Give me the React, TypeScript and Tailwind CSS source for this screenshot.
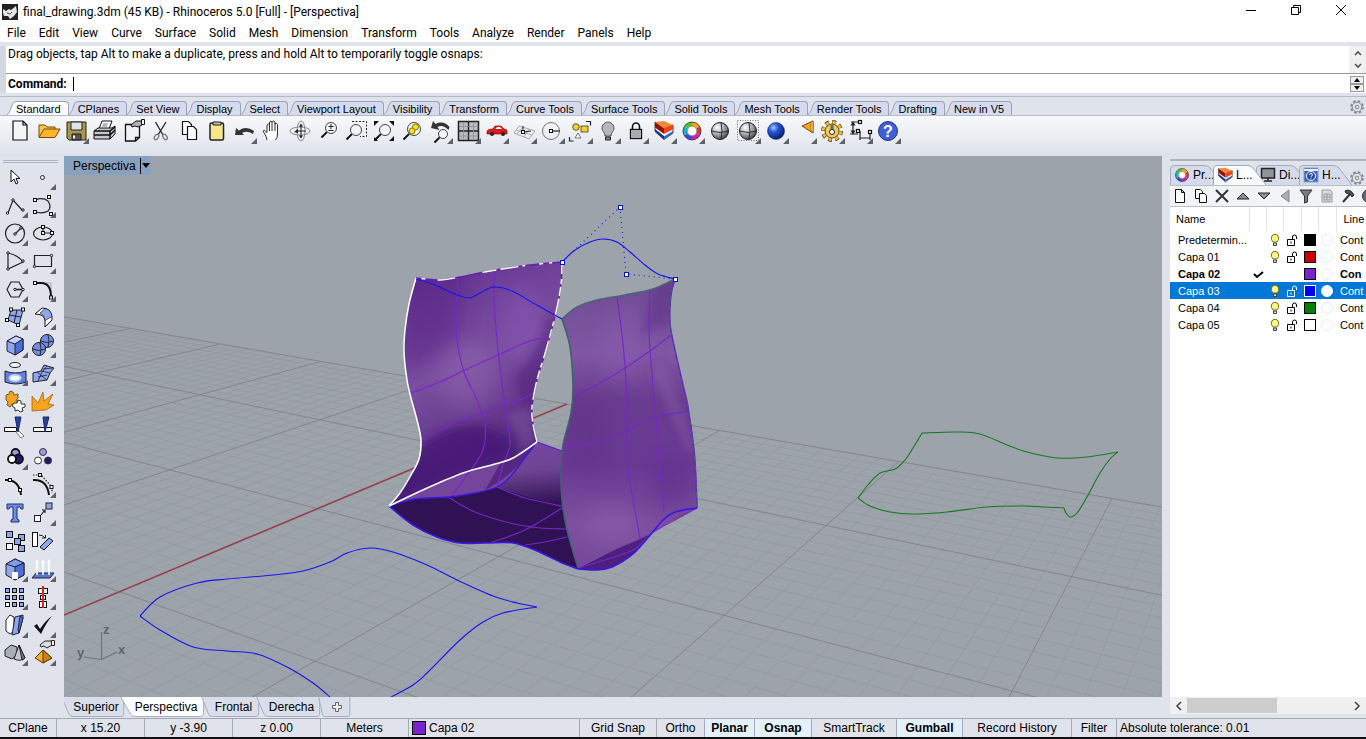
import React from "react";

type Pt = [number, number];

// Catmull-Rom spline through the points
const smooth = (pts: Pt[], move = true) => {
  let d = move ? `M${pts[0][0]} ${pts[0][1]}` : "";
  for (let i = 0; i < pts.length - 1; i++) {
    const p0 = pts[i - 1] || pts[i];
    const p1 = pts[i];
    const p2 = pts[i + 1];
    const p3 = pts[i + 2] || p2;
    d += `C${p1[0] + (p2[0] - p0[0]) / 6} ${p1[1] + (p2[1] - p0[1]) / 6} ${p2[0] - (p3[0] - p1[0]) / 6} ${p2[1] - (p3[1] - p1[1]) / 6} ${p2[0]} ${p2[1]}`;
  }
  return d;
};

// Construction plane -> screen
const project = (u: number, v: number): Pt => {
  const w = 1 - 0.05714 * u - 0.0952 * v;
  return [(131 + 76.6 * u - 126.3 * v) / w, (328.5 - 4.2 * u - 8.03 * v) / w];
};

const gridLine = (a: Pt, b: Pt) => {
  const p = project(...a);
  const q = project(...b);
  return `M${p[0].toFixed(1)} ${p[1].toFixed(1)}L${q[0].toFixed(1)} ${q[1].toFixed(1)}`;
};

const STEPS = 10;
let minorPath = "";
let majorPath = "";
for (let i = -1 * STEPS; i <= 8 * STEPS; i++) {
  if (i === 4 * STEPS) continue;
  const line = gridLine([i / STEPS, 0], [i / STEPS, 4.5]);
  if (i % STEPS === 0) majorPath += line;
  else minorPath += line;
}
for (let j = 0; j <= 4 * STEPS; j++) {
  const line = gridLine([-1, j / STEPS], [8, j / STEPS]);
  if (j % STEPS === 0) majorPath += line;
  else minorPath += line;
}

const leftEdge: Pt[] = [[416, 278], [409, 304], [405, 330], [404, 352], [407, 380], [411, 398], [417, 420], [421, 440], [419, 459], [411, 475], [400, 493], [389, 506]];
const whiteBase: Pt[] = [[389, 506], [425, 489], [463, 473], [495, 464], [513, 458], [537, 442]];
const leftRight: Pt[] = [[537, 442], [533, 424], [532, 407], [537, 380], [546, 350], [556, 312], [561, 284], [562, 262]];
const leftTop: Pt[] = [[562, 262], [530, 265], [490, 271], [460, 277], [440, 280], [416, 278]];
const leftSheet = smooth(leftEdge) + smooth(whiteBase, false) + smooth(leftRight, false) + smooth(leftTop, false) + "Z";

const stripEdge: Pt[] = [[389, 506], [415, 499], [448, 497], [475, 493], [497, 487], [510, 477], [523, 460], [537, 442]];
const strip = smooth(stripEdge) + smooth([...whiteBase].reverse(), false) + "Z";

const baseFront: Pt[] = [[389, 506], [413, 525], [437, 537], [460, 543], [485, 543], [513, 543], [537, 551], [560, 562], [578, 569]];
const baseLip: Pt[] = [[578, 569], [595, 570], [612, 567], [633, 554], [652, 533], [662, 521], [675, 512], [697, 508]];
const base = smooth(baseFront) + "L570 505L562 451L537 442" + smooth([...stripEdge].reverse(), false) + "Z";

const rightTop: Pt[] = [[562, 319], [577, 307], [597, 300], [625, 295], [653, 289], [675, 279]];
const rightRight: Pt[] = [[675, 279], [671, 295], [670, 323], [675, 350], [683, 385], [688, 407], [694, 450], [696, 480], [697, 508]];
const rightBottom: Pt[] = [[697, 508], [675, 519], [652, 533], [640, 539], [610, 552], [578, 568]];
const rightLeft: Pt[] = [[578, 568], [567, 530], [562, 500], [561, 470], [563, 445], [571, 413], [573, 387], [570, 347], [562, 319]];
const rightSheet = smooth(rightTop) + smooth(rightRight, false) + smooth(rightBottom, false) + smooth(rightLeft, false) + "Z";

const blueCurve = smooth([[330, 697], [313, 683], [287, 667], [257, 654], [227, 651], [193, 647], [160, 630], [140, 616]]) +
  smooth([[140, 616], [160, 597], [197, 583], [227, 579], [273, 575], [303, 571], [330, 562], [347, 553], [370, 548], [393, 552], [427, 565], [457, 580], [493, 596], [517, 603], [537, 607]]) +
  smooth([[537, 607], [503, 613], [483, 622], [460, 640], [427, 673], [413, 685], [391, 697]]);

const greenCurve = smooth([[922, 433], [957, 432], [980, 434], [1007, 445], [1027, 452], [1057, 458], [1087, 457], [1118, 452]]) +
  smooth([[1118, 452], [1110, 459], [1100, 473], [1087, 497], [1077, 513], [1070, 517], [1066, 513], [1064, 508]]) +
  smooth([[1064, 508], [1047, 507], [1023, 506], [987, 507], [947, 512], [913, 514], [890, 512], [870, 506], [858, 498]]) +
  smooth([[858, 498], [868, 485], [880, 473], [895, 469], [905, 460], [913, 448], [922, 433]]);

const handles: Pt[] = [[562, 262], [620, 207], [626, 274], [675, 279]];

function Scene() {
  return (
    <svg viewBox="64 156 1098 541" preserveAspectRatio="xMinYMin slice" className="absolute inset-0 h-full w-full">
      <defs>
        <linearGradient id="leftFill" x1="0" y1="0" x2="0.3" y2="1">
          <stop offset="0" stopColor="#5d2a87" />
          <stop offset="0.22" stopColor="#6d3d98" />
          <stop offset="0.5" stopColor="#7b50a0" />
          <stop offset="0.7" stopColor="#6a3e90" />
          <stop offset="1" stopColor="#451a72" />
        </linearGradient>
        <linearGradient id="rightFill" x1="0" y1="0" x2="0" y2="1">
          <stop offset="0" stopColor="#6f4b92" />
          <stop offset="0.26" stopColor="#7f57a2" />
          <stop offset="0.42" stopColor="#693c8f" />
          <stop offset="0.65" stopColor="#693a94" />
          <stop offset="0.85" stopColor="#7d519f" />
          <stop offset="1" stopColor="#75489b" />
        </linearGradient>
        <linearGradient id="innerFill" x1="0.4" y1="0" x2="0.5" y2="1">
          <stop offset="0" stopColor="#7546a0" />
          <stop offset="0.45" stopColor="#6e4393" />
          <stop offset="1" stopColor="#2d1050" />
        </linearGradient>
        <filter id="soft" x="-50%" y="-50%" width="200%" height="200%">
          <feGaussianBlur stdDeviation="10" />
        </filter>
        <filter id="soft2" x="-50%" y="-50%" width="200%" height="200%">
          <feGaussianBlur stdDeviation="4" />
        </filter>
        <clipPath id="leftClip"><path d={leftSheet} /></clipPath>
        <clipPath id="rightClip"><path d={rightSheet} /></clipPath>
      </defs>

      <path d={minorPath} stroke="#90969d" strokeWidth="1" fill="none" opacity="0.5" />
      <path d={majorPath} stroke="#81868d" strokeWidth="1" fill="none" />
      <path d="M64 615L567 404" stroke="#963f49" strokeWidth="1.6" />

      <path d={base} fill="#2f1154" />
      <path d="M537 442L563 451L563 507Q525 497 497 487Q515 475 523 460Z" fill="url(#innerFill)" />
      <path d={smooth(baseLip) + "L578 568Z"} fill="#4d2080" />
      <g fill="none" stroke="#7428c4" strokeWidth="1.2">
        <path d={smooth([[448, 497], [475, 512], [510, 523], [540, 528], [566, 529]])} />
        <path d={smooth([[497, 487], [525, 498], [562, 506]])} />
        <path d={smooth([[492, 542], [525, 530], [562, 508]])} />
        <path d={smooth([[525, 545], [545, 542], [567, 537]])} />
      </g>

      <path d={leftSheet} fill="url(#leftFill)" />
      <g clipPath="url(#leftClip)">
        <path d="M395 260L470 265Q460 330 455 345L400 375Z" fill="#511e7e" opacity="0.4" filter="url(#soft)" />
        <ellipse cx="522" cy="325" rx="18" ry="40" fill="#8654b4" opacity="0.6" filter="url(#soft)" />
        <ellipse cx="468" cy="375" rx="30" ry="34" fill="#8c64aa" opacity="0.55" filter="url(#soft)" />
        <path d="M563 310L545 320Q545 345 515 375Q520 410 532 425Z" fill="#4d1b79" opacity="0.5" filter="url(#soft2)" />
        <path d="M421 445Q460 415 495 430Q515 440 510 455Q450 475 390 505L380 480Z" fill="#451974" opacity="0.75" filter="url(#soft2)" />
        <path d="M507 415L520 440L518 455L536 442L532 405Z" fill="#8560a4" opacity="0.45" filter="url(#soft2)" />
      </g>
      <path d={strip} fill="#74459a" />
      <path d="M485 490Q515 475 536 443Q520 458 500 464Z" fill="#4a1d78" opacity="0.7" />
      <g fill="none" stroke="#7528c6" strokeWidth="1.2">
        <path d={smooth([[458, 279], [456, 310], [457, 340], [464, 372], [477, 400], [485, 425], [483, 450], [470, 471], [452, 495]])} />
        <path d={smooth([[495, 271], [494, 300], [498, 350], [503, 390], [508, 425], [510, 445], [503, 465], [497, 486]])} />
        <path d={smooth([[411, 393], [440, 382], [465, 370], [500, 354], [530, 341], [549, 337]])} />
        <path d={smooth([[421, 440], [450, 425], [480, 414], [510, 404], [534, 393]])} />
      </g>

      <path d={rightSheet} fill="url(#rightFill)" />
      <g clipPath="url(#rightClip)">
        <ellipse cx="622" cy="345" rx="24" ry="34" fill="#8a5cb0" opacity="0.5" filter="url(#soft)" />
        <path d="M655 285L678 278L668 330Q655 320 640 340Z" fill="#5a2a85" opacity="0.45" filter="url(#soft2)" />
        <path d="M650 370L665 365L696 450L690 455Z" fill="#8d66ac" opacity="0.4" filter="url(#soft2)" />
        <ellipse cx="612" cy="525" rx="26" ry="20" fill="#8c5eae" opacity="0.5" filter="url(#soft)" />
        <ellipse cx="670" cy="485" rx="20" ry="26" fill="#592b87" opacity="0.4" filter="url(#soft)" />
        <ellipse cx="585" cy="435" rx="22" ry="40" fill="#5b2d82" opacity="0.35" filter="url(#soft)" />
      </g>
      <g fill="none" stroke="#7528c6" strokeWidth="1.2">
        <path d={smooth([[617, 297], [622, 335], [626, 380], [627, 430], [628, 470], [634, 505], [640, 538]])} />
        <path d={smooth([[650, 290], [649, 330], [652, 375], [656, 420], [660, 470], [664, 512]])} />
        <path d={smooth([[573, 396], [595, 386], [625, 368], [650, 351], [671, 335]])} />
        <path d={smooth([[563, 447], [590, 444], [620, 434], [650, 419], [688, 411]])} />
        <path d={smooth([[578, 568], [605, 560], [635, 549], [652, 533], [675, 520], [697, 508]])} />
      </g>

      <path d={smooth(rightTop)} fill="none" stroke="#4c6378" strokeWidth="1.6" />
      <path d={smooth(rightLeft)} fill="none" stroke="#40606f" strokeWidth="1.6" />
      <path d={smooth(rightRight)} fill="none" stroke="#6422c8" strokeWidth="1.5" />
      <path d={smooth(rightRight)} fill="none" stroke="#3e6a60" strokeWidth="1" strokeDasharray="5 4" />
      <path d={smooth(baseFront)} fill="none" stroke="#3c16e6" strokeWidth="1.6" />
      <path d={smooth(baseLip)} fill="none" stroke="#3c16e6" strokeWidth="1.6" />
      <path d={smooth(stripEdge)} fill="none" stroke="#3c16e6" strokeWidth="1.3" />
      <path d="M537 442L562 451" stroke="#5a20c8" strokeWidth="1.3" />
      <path d={smooth(leftTop)} fill="none" stroke="#6420a8" strokeWidth="1.4" />
      <path d={smooth(leftTop)} fill="none" stroke="#fff" strokeWidth="1.4" strokeDasharray="2 8 3 6 4 14 3 4 18 4 14 28 18 12 4 40" />
      <path d={smooth(leftRight)} fill="none" stroke="#6420a8" strokeWidth="1.4" />
      <path d={smooth(leftRight)} fill="none" stroke="#fff" strokeWidth="1.4" strokeDasharray="18 3 9 3 5 5" />
      <path d={smooth(leftEdge)} fill="none" stroke="#fff" strokeWidth="1.5" />
      <path d={smooth(whiteBase)} fill="none" stroke="#fff" strokeWidth="1.6" />

      <g fill="none" stroke="#1515f0" strokeWidth="1.1">
        <path d={smooth([[416, 279], [435, 285], [455, 294], [469, 298], [480, 293], [494, 287], [512, 291], [535, 304], [562, 319]])} />
        <path d={smooth([[562, 262], [575, 250], [590, 242], [603, 239], [617, 242], [630, 252], [645, 265], [658, 274], [675, 279]])} />
        <path d={blueCurve} />
        <path d="M562 262L620 207L626 274L675 279" strokeDasharray="1 4" />
      </g>
      <path d={greenCurve} fill="none" stroke="#147a20" strokeWidth="1.1" />
      {handles.map(([x, y]) => (
        <rect key={`${x}-${y}`} x={x - 1.5} y={y - 1.5} width="4" height="4" fill="#fff" stroke="#0a14c8" />
      ))}

      <g fill="none" stroke="#6f757c" strokeWidth="1.2">
        <path d="M101.500 632V659.500M101 659.500L84 657M101 659.500L117 652" />
      </g>
      <g fill="#61676e" fontFamily="Liberation Sans, Arial, sans-serif" fontWeight="bold" fontSize="13">
        <text x="103" y="634">z</text>
        <text x="118" y="654">x</text>
        <text x="77" y="657">y</text>
      </g>
    </svg>
  );
}

const k = { fill: "none", stroke: "#222", strokeWidth: 1.2 };
const dot = (x: number, y: number) => <rect x={x - 1.5} y={y - 1.5} width="3" height="3" fill="#fff" stroke="#111" />;
const knot = (x: number, y: number) => <circle cx={x} cy={y} r="1.2" fill="#fff" stroke="#111" />;
const sphere = (fill: string, cx = 14, cy = 14, r = 8.5) => (
  <g>
    <circle cx={cx} cy={cy} r={r} fill={fill} stroke="#222" />
    <path d={`M${cx - r} ${cy}Q${cx} ${cy + 3} ${cx + r} ${cy}M${cx + 1} ${cy - r}Q${cx + 3} ${cy} ${cx + 1} ${cy + r}`} {...k} strokeWidth={0.9} />
  </g>
);
const lens = (cx = 17, cy = 11, r = 5.5) => (
  <g>
    <circle cx={cx} cy={cy} r={r} fill="#f2f4f7" stroke="#444" />
    <path d={`M${cx - r * 0.75} ${cy + r * 0.75}L${cx - r - 4} ${cy + r + 4}`} stroke="#111" strokeWidth="2" />
  </g>
);
const page = (x = 7, y = 4) => (
  <path d={`M${x} ${y}h10l4 4v15h-14zM${x + 10} ${y}v4h4`} fill="#f4f5f7" stroke="#111" strokeWidth="1.2" />
);
const layersArt = (
  <g>
    <path d="M5 5l9 6 9-3v8l-9 6.500-9-8z" fill="#fff" stroke="#222" strokeWidth="0.8" />
    <path d="M5 5l9 6v6l-9-6.500z" fill="#8e1408" />
    <path d="M5 5l9-1 9 4-9 3.500z" fill="#f08a3c" />
    <path d="M14 11l9-3v4.500l-9 4.500z" fill="#f2441c" />
    <path d="M5 12l9 7v3.500l-9-8z" fill="#17328c" />
    <path d="M14 19.500l9-5.500v2.500l-9 6z" fill="#2b62d8" />
  </g>
);
const wheelArt = (
  <g fill="none" strokeWidth="4">
    <path d="M14 7a7 7 0 0 1 6 3.500" stroke="#f3a21b" />
    <path d="M20 10.500a7 7 0 0 1 0 7" stroke="#e3342f" />
    <path d="M20 17.500a7 7 0 0 1-6 3.500" stroke="#d11fb4" />
    <path d="M14 21a7 7 0 0 1-6-3.500" stroke="#3b49df" />
    <path d="M8 17.500a7 7 0 0 1 0-7" stroke="#18b2c9" />
    <path d="M8 10.500a7 7 0 0 1 6-3.500" stroke="#4cc52f" />
    <circle cx="14" cy="14" r="9" stroke="#333" strokeWidth="0.8" />
    <circle cx="14" cy="14" r="4.800" fill="#fff" stroke="#555" strokeWidth="0.6" />
  </g>
);

type Tool = { name: string; art: React.ReactNode; more?: boolean };

const topTools: Tool[] = [
  { name: "New", art: page() },
  { name: "Open", art: <g stroke="#7a4a00"><path d="M5 20V8h6l2 2h8v4" fill="#f6c64c" /><path d="M5 20.500l5-8.500h16l-5 8.500z" fill="#fbb52c" /></g> },
  { name: "Save", more: true, art: <g stroke="#222"><path d="M5 5h19v18H7l-2-2z" fill="#a89a48" /><path d="M9 5h11v8H9z" fill="#dfe3ea" /><path d="M10 17h9v6h-9z" fill="#555" /><path d="M12 18.500v3" stroke="#fff" strokeWidth="2" /></g> },
  { name: "Print", art: <g stroke="#111"><path d="M9 12l3-8h10l-3 8z" fill="#fff" /><path d="M13 7h5M12 9h5" stroke="#777" /><path d="M4 14l4-3h14l3-2v8l-5 5H4z" fill="#c5c9cf" /><path d="M4 14h16l5-4M20 14v8M4 18h16l5-5" fill="none" strokeWidth="1.5" /></g> },
  { name: "Properties", art: <g><path d="M7.500 7.500h14v13l-4 3.500h-10zM17.500 24v-3.500h4" fill="#f0f1f4" stroke="#111" strokeWidth="1.3" /><path d="M13 8l5-4h6v4l-4 2-3-1-3 1z" fill="#aeb3ba" stroke="#111" /><path d="M23.500 2.500h3v5h-3z" fill="#fff" stroke="#111" /></g> },
  { name: "Cut", art: <g fill="none" stroke="#222" strokeWidth="1.3"><path d="M9.500 5l7.500 13M20 5l-8 13" /><ellipse cx="10.500" cy="20" rx="1.800" ry="3" transform="rotate(35 10.500 20)" stroke="#777" /><ellipse cx="19" cy="20" rx="1.800" ry="3" transform="rotate(-35 19 20)" stroke="#777" /></g> },
  { name: "Copy", art: <g fill="#fff" stroke="#111" strokeWidth="1.2"><path d="M8.500 4.500h6l3 3v10h-9z" /><path d="M13.500 9.500h6l3 3v10h-9z" /></g> },
  { name: "Paste", art: <g stroke="#222"><rect x="8" y="6" width="13.500" height="17" rx="1.500" fill="#f9e787" strokeWidth="1.5" /><path d="M11 7V5h8v3h-8z" fill="#b9bec7" /></g> },
  { name: "Undo", more: true, art: <path d="M5 18l1-7 3 2.500q7-5 15 .5l-1 3q-6-4-11-1l2 2z" fill="#333" /> },
  { name: "Pan", art: <path d="M9 23q0-3-4-9 1-2 4 1.500V8q1.500-2 2.500 0V5q1.500-2 2.500 0v0q1.500-2 3 0v2q2-1.500 2.500.5V17q0 4-2 6M11.500 8v6M14 5v9M17 6v8" fill="#fff" stroke="#333" /> },
  { name: "Rotate View", art: <g fill="none" stroke="#888"><ellipse cx="14" cy="14" rx="10" ry="4" /><ellipse cx="15" cy="14" rx="4" ry="10" /><path d="M15 8v12M10 14h10" stroke="#222" /><path d="M13 9.500l2-3 2 3zM13 18.500l2 3 2-3zM8 15l4-3v4z" fill="#222" stroke="none" /></g> },
  { name: "Zoom Dynamic", art: <g>{lens()}<path d="M14.500 9.500h5M17 7v5M14.500 13.500h5" {...k} strokeWidth={1} /></g> },
  { name: "Zoom Window", art: <g><path d="M10 4.500h14.500v15H18" {...k} strokeDasharray="2 1.500" strokeWidth={1} />{lens(14, 13)}</g> },
  { name: "Zoom Extents", art: <g>{lens(15, 13)}<path d="M4 4h5l-5 5zM24 4h-5l5 5zM4 24h4l-4-4zM24 24h-5l5-5z" fill="#111" /></g> },
  { name: "Zoom Selected", art: <g>{lens(16, 12, 6.5)}<circle cx="17.500" cy="10" r="3" fill="#f5e11c" stroke="#8a7a00" /><circle cx="14" cy="14" r="3" fill="#f5e11c" stroke="#8a7a00" /></g> },
  { name: "Undo View", more: true, art: <g>{lens(17, 17, 4.5)}<path d="M5 11l2-7 2.500 3q8-4 14 3l-1 3q-6-6-11-3l2 3z" fill="#333" /></g> },
  { name: "Four Viewports", more: true, art: <g><rect x="4.500" y="4.500" width="20" height="19" fill="#b9bcc2" stroke="#222" strokeWidth="1.5" /><path d="M14.500 4v20M4 14h21" {...k} strokeWidth={1.4} /><path d="M19.500 5v18M5 19h19M9.500 5v18M5 9.500h19" {...k} stroke="#8b8f96" strokeWidth={0.8} /></g> },
  { name: "Car", more: true, art: <g><path d="M5 15q0-3 6-3l2-3h6l3 3q3 0 3 2v3H5z" fill="#de1b1b" stroke="#8a0a0a" strokeWidth="0.7" /><path d="M13.500 12l1.500-2h3l2 2z" fill="#fff" /><circle cx="10" cy="17" r="2" fill="#222" /><circle cx="21" cy="17" r="2" fill="#222" /></g> },
  { name: "CPlane", more: true, art: <g fill="none" stroke="#aaa"><path d="M9 9l16 5-6 8-15-6zM6 13l16 5M13 10l-6 7M19 12l-5 8" /><path d="M13 15V9M14 15l7-1" stroke="#222" />{dot(13, 15)}</g> },
  { name: "Circle", more: true, art: <g><circle cx="13" cy="14" r="8.500" {...k} stroke="#777" strokeWidth={1} /><path d="M13 14h9" {...k} />{dot(13, 14)}</g> },
  { name: "Select", more: true, art: <g><circle cx="10" cy="10" r="3.300" fill="#f5d322" stroke="#222" strokeWidth="0.7" /><rect x="15" y="9" width="7" height="6" fill="#f5d322" stroke="#222" strokeWidth="0.7" /><path d="M12 16l3 5H9z" fill="#fff" stroke="#777" /><path d="M20 4.500h4.500v4M3.500 20v4h4" {...k} /></g> },
  { name: "Hide", more: true, art: <g stroke="#555"><path d="M11 19q0-3-2.500-5.500a6 6 0 1 1 11 0Q17 16 17 19z" fill="#b3b6bb" /><path d="M11.500 20h5v3h-5z" fill="#888" stroke="#222" /></g> },
  { name: "Lock", more: true, art: <g><path d="M10.500 13V9.500a3.500 3.500 0 0 1 7 0V13" fill="none" stroke="#111" strokeWidth="1.6" /><rect x="8.500" y="12.500" width="11" height="9" fill="#c9ccd1" stroke="#111" strokeWidth="1.3" /><path d="M10 15h8M10 17h8M10 19h8" stroke="#888" /></g> },
  { name: "Layers", more: true, art: layersArt },
  { name: "Properties Wheel", more: true, art: wheelArt },
  { name: "Shade", art: sphere("url(#greyBall)") },
  { name: "Shade Selected", more: true, art: <g><rect x="3.500" y="3.500" width="21" height="20" fill="none" stroke="#777" strokeDasharray="1 1.500" />{sphere("url(#greyBall)")}</g> },
  { name: "Render", more: true, art: <circle cx="14" cy="14" r="8.500" fill="url(#blueBall)" stroke="#0b1a66" strokeWidth="0.5" /> },
  { name: "Spotlight", more: true, art: <g stroke="#7a4a00"><path d="M12 9l11-5 0 12z" fill="#f7a61e" /><path d="M21 5l2-1v12l-2-3z" fill="#ffd98a" strokeWidth="0.6" /></g> },
  { name: "Options", more: true, art: <g><circle cx="14" cy="14" r="8.500" fill="none" stroke="#6b4a00" strokeWidth="5" strokeDasharray="3.600 3.070" /><circle cx="14" cy="14" r="8.300" fill="none" stroke="#ecc258" strokeWidth="3.6" strokeDasharray="2.600 3.920" strokeDashoffset="-0.5" /><circle cx="14" cy="14" r="7" fill="#efc85c" stroke="#6b4a00" /><path d="M14 8v7" stroke="#666" strokeWidth="3" /><circle cx="14" cy="15" r="2.500" fill="#fff" stroke="#222" /></g> },
  { name: "Dimension", more: true, art: <g {...k}><path d="M5 5h9M7 6v9M4 17h8M14 14v9M14 21h10M24 14v9M19 21h1" /><path d="M5.500 8L7 5.500 8.500 8zM5.500 14L7 16.500 8.500 14z" fill="#111" />{dot(14, 5)}{dot(12, 14)}{dot(24, 15)}</g> },
  { name: "Help", more: true, art: <g><circle cx="14" cy="14" r="9.500" fill="#3f5fd6" stroke="#1c2f8f" /><text x="14" y="20" textAnchor="middle" fontSize="16" fontWeight="bold" fontFamily="Liberation Sans, Arial, sans-serif" fill="#fff">?</text></g> },
];

const B = "#8ea6ee";
const sideTools: Tool[] = [
  { name: "Pointer", art: <path d="M10 7v12l3-3 2 5 2-1-2-4.500h4z" fill="#fff" stroke="#111" /> },
  { name: "Point", more: true, art: <circle cx="13.500" cy="14.500" r="2" fill="#fff" stroke="#222" /> },
  { name: "Polyline", more: true, art: <g><path d="M7 22l5-13 10 11" {...k} />{knot(6.5, 22)}{knot(12, 9)}{knot(22, 19)}</g> },
  { name: "Curve", more: true, art: <g><path d="M6 9q8-3 13 1 4 6 0 10-5 3-13 1" {...k} />{dot(6, 9)}{dot(20, 6)}{dot(6, 21)}{dot(22, 23)}</g> },
  { name: "Circle", more: true, art: <g><circle cx="14" cy="14.500" r="9.500" {...k} /><path d="M14 15l6-6" {...k} />{knot(14, 15)}{knot(20, 9)}</g> },
  { name: "Ellipse", more: true, art: <g><ellipse cx="14" cy="14.500" rx="9.500" ry="6.500" {...k} /><path d="M14 14V8M14 14h9" {...k} />{dot(14, 14)}{dot(14, 8)}{dot(23, 14)}</g> },
  { name: "Arc", more: true, art: <g><path d="M7 6v16l15-7Q17 8 7 6" {...k} />{knot(7, 6)}{knot(22, 14)}{knot(7, 22)}</g> },
  { name: "Rectangle", more: true, art: <g><path d="M5.500 8.500h17v11h-17z" {...k} />{knot(22.5, 8.5)}{knot(5.5, 19.5)}</g> },
  { name: "Polygon", more: true, art: <g><path d="M6 14.500l4-7.500h8l4 7.500-4 7.500h-8z" {...k} /><path d="M14 14.500h8" {...k} strokeWidth={1.6} />{knot(14, 14.5)}{knot(22, 14.5)}</g> },
  { name: "Fillet", more: true, art: <g><path d="M6 8h16v15" fill="none" stroke="#aaa" /><path d="M6 8h6q10 0 10 14" fill="none" stroke="#111" strokeWidth="2" />{dot(6, 8)}{dot(22, 22.5)}</g> },
  { name: "Surface", more: true, art: <g><path d="M10 7h12l-4 15-11-5z" fill={B} stroke="#223" /><path d="M8 12l12 2M16 7l-3 13" {...k} strokeWidth={1} />{dot(10, 6.5)}{dot(22, 6.5)}{dot(6, 17)}{dot(17, 22)}</g> },
  { name: "Sweep", more: true, art: <g stroke="#111"><path d="M6 11l7-6q9 0 10 9v3l-7 7v-7q-1-6-10-6z" fill="#fff" /><path d="M11 10l5-4.500q6 1 7 8l-7 4q-1-6-5-7.500z" fill={B} strokeWidth="0.6" /></g> },
  { name: "Box", more: true, art: <g stroke="#223"><path d="M6 10l9-5 7 3v11l-8 5-8-4z" fill={B} /><path d="M6 10l8 3 8-5-7-3z" fill="#c5d2fb" /><path d="M14 13v11l8-5V8z" fill="#4f6fd8" /></g> },
  { name: "Boolean", more: true, art: <g>{sphere("#6f8ce6", 18, 10, 6.5)}{sphere("#6f8ce6", 10, 18, 6.5)}</g> },
  { name: "Project", more: true, art: <g stroke="#223"><ellipse cx="14" cy="6" rx="5.500" ry="2.500" fill="#f6f7fb" /><path d="M4 12q10 4 21 0v11q-10 4-21 0z" fill="#5f82e4" /><ellipse cx="14" cy="19" rx="5.500" ry="3" fill="#fff" stroke="#c5d2fb" strokeWidth="2" /></g> },
  { name: "Mesh", more: true, art: <g stroke="#223"><path d="M4 14l8-2 3-6 10 3-4 5-3 7-14 2z" fill={B} /><path d="M12 12l9 2M9 18l9-2M18 7l-5 6-4 9M8 13l10 8M14 10l10-1" {...k} strokeWidth={0.8} /></g> },
  { name: "Join", art: <g stroke="#553" strokeWidth="0.9"><path d="M5 8l3-1 1-3 3 1 1 3 4-1v4l-2 2 2 3-2 2-4-1-2 3-3-2 1-3-2-2z" fill="#f7a21c" /><path d="M13 16l3 0 1-3 3 1 0 3 4 0 0 3-3 1 1 3-3 1-2-2-3 1 0-3-3-2z" fill="#fff" stroke="#222" /></g> },
  { name: "Explode", art: <path d="M3 24V9l6 7 5-11 1 9 9-7-5 10 6 1-8 5z" fill="#f8a31d" stroke="#a0560a" strokeWidth="0.7" /> },
  { name: "Trim", art: <g stroke="#111"><path d="M3.500 12.500h12v4h-12z" fill="#fff" /><path d="M17 15l6 6-3 2-5-6z" fill="#fff" stroke="#777" /><path d="M14 2h6l-3 15z" fill="#24439e" stroke="#18276b" /></g> },
  { name: "Split", art: <g stroke="#111"><path d="M4.500 12.500h18v4h-18z" fill="#fff" /><path d="M14 2h6l-4 15z" fill="#24439e" stroke="#18276b" /></g> },
  { name: "Group", more: true, art: <g stroke="#111" strokeWidth="1.8"><circle cx="14.500" cy="10" r="4" fill="#9f97e8" /><circle cx="17.500" cy="16" r="4.500" fill="#201a70" /><circle cx="11" cy="16" r="4" fill="#fff" /></g> },
  { name: "Ungroup", art: <g stroke="#333"><circle cx="14" cy="9" r="3.500" fill="#9f97e8" /><circle cx="9" cy="17.500" r="3.500" fill="#fff" /><circle cx="19" cy="17.500" r="3.500" fill="#201a70" /></g> },
  { name: "Edit Points", art: <g><path d="M4 9q14-1 16 15" fill="none" stroke="#111" strokeWidth="2" />{dot(9, 9)}{dot(19, 19)}</g> },
  { name: "Control Points", more: true, art: <g><path d="M4 9q14-1 16 15" fill="none" stroke="#111" strokeWidth="2" /><path d="M4 4h8l11 12v6" {...k} strokeDasharray="1.5 1.5" />{dot(11, 4)}{dot(22.5, 16)}</g> },
  { name: "Text", art: <path d="M6 5h16v5l-2 0-1-2h-3v12l2 1v2h-8v-2l2-1V8H9l-1 2H6z" fill="#6c8be6" stroke="#1c2f7c" /> },
  { name: "Move", more: true, art: <g stroke="#222"><rect x="17" y="4" width="6" height="6" fill={B} /><rect x="5.500" y="16.500" width="6" height="6" fill="#fff" /><path d="M12 16l4-5M13 11h3v3" {...k} /></g> },
  { name: "Array Copy", art: <g stroke="#111" fill={B}><rect x="5.500" y="4.500" width="6" height="6" /><rect x="17.500" y="7.500" width="6" height="6" /><rect x="13.500" y="11.500" width="6" height="6" /><rect x="5.500" y="16.500" width="6" height="6" fill="#fff" /><rect x="17.500" y="18.500" width="6" height="6" /></g> },
  { name: "Orient", art: <g stroke="#111"><rect x="3.500" y="5.500" width="5" height="14" fill="#fff" /><path d="M11 20l9-9 4 3-9 9z" fill={B} /><path d="M10 8q4 0 6 3M13 11h3.500V8" {...k} strokeWidth={1} /></g> },
  { name: "Solid Edit", more: true, art: <g stroke="#223"><path d="M5 9l9-5 9 4v12l-9 5-9-5z" fill={B} /><path d="M5 9l9 3 9-4-9-4z" fill="#7f9cec" /><path d="M14 12v13l9-5V8z" fill="#4f6fd8" /><path d="M11 17h6v7h-6z" fill="#fff" stroke="none" /></g> },
  { name: "Extrude", more: true, art: <g><path d="M7 18h18l-4 5H3z" fill="#5577e0" stroke="#223" /><path d="M8 20V7M14 20V7M20 20V7" stroke="#fff" strokeWidth="1.6" /><path d="M6 8l2-4 2 4zM12 8l2-4 2 4zM18 8l2-4 2 4z" fill="#fff" /></g> },
  { name: "Array", more: true, art: <g stroke="#111">{[5, 12, 19].map((x) => [6, 13, 20].map((y) => <rect key={`${x}-${y}`} x={x - 0.5} y={y - 0.5} width="4" height="4" fill={y === 20 && x === 5 ? "#fff" : B} />))}</g> },
  { name: "Align", more: true, art: <g stroke="#111" fill="#fff"><rect x="9.500" y="5.500" width="9" height="5" /><rect x="11.500" y="12.500" width="5" height="4" /><rect x="10.500" y="18.500" width="7" height="6" /><path d="M14 3v22" stroke="#dd2222" strokeWidth="2" /></g> },
  { name: "Deform", more: true, art: <g stroke="#223"><path d="M5 9l4-5 4 2v14l-4 3-4-3z" fill="#fff" /><path d="M14 6l8-2v3l-4 15-7 2z" fill={B} /><path d="M19 5l3 2-4 15-1-3z" fill="#4f6fd8" /></g> },
  { name: "Check", more: true, art: <path d="M5 15l3-2 3 5q5-8 12-13-6 7-11 18z" fill="#111" /> },
  { name: "Mesh Solids", more: true, art: <g stroke="#222"><path d="M4 11l6-5 6 2v8l-5 4-7-3z" fill="#a9aeb5" /><path d="M18 6l6 13q-4 4-11 1z" fill="#c5c9cf" /><path d="M18 6l6 13-3 2z" fill="#777" /></g> },
  { name: "Render Tools", more: true, art: <g stroke="#5a3a00"><path d="M14 11l9 8-9 5-8-5z" fill="#f2ad2d" /><path d="M14 11v13l9-5z" fill="#c9821a" /><path d="M11 6l5-4h6l1 4-5 3-3-2-3 1z" fill="#ddd" stroke="#222" /><path d="M22.500 1.500h3v5h-3z" fill="#fff" stroke="#222" /></g> },
];

function ToolButton({ tool }: { tool: Tool }) {
  return (
    <button aria-label={tool.name} className="size-7 shrink-0">
      <svg viewBox="0 0 28 28" className="size-7">
        {tool.art}
        {tool.more && <path d="M27 21v6h-6z" fill="#5d6066" />}
      </svg>
    </button>
  );
}

const menus = ["File", "Edit", "View", "Curve", "Surface", "Solid", "Mesh", "Dimension", "Transform", "Tools", "Analyze", "Render", "Panels", "Help"];
const toolTabs = ["Standard", "CPlanes", "Set View", "Display", "Select", "Viewport Layout", "Visibility", "Transform", "Curve Tools", "Surface Tools", "Solid Tools", "Mesh Tools", "Render Tools", "Drafting", "New in V5"];

function ToolTab({ label, active }: { label: string; active: boolean }) {
  return (
    <button className="flex h-[14px] items-stretch">
      <svg width="9" height="14" viewBox="0 0 9 14" className="shrink-0">
        <path d="M0 14Q4 10 5 4Q6 .5 9 .5V14Z" fill={active ? "#fbfcfd" : "#d5dbec"} />
        <path d="M0 14Q4 10 5 4Q6 .5 9 .5" fill="none" stroke="#9aa3b8" />
      </svg>
      <span className={`rounded-tr-[4px] border-t border-r border-[#9aa3b8] pr-[7px] leading-[14px] ${active ? "bg-[#fbfcfd]" : "bg-[#d5dbec]"}`}>{label}</span>
    </button>
  );
}

function Gear() {
  return (
    <svg viewBox="0 0 14 14" className="size-[14px]" fill="none" stroke="#85898f">
      <circle cx="7" cy="7" r="6" strokeWidth="1.6" strokeDasharray="2.700 2.010" />
      <circle cx="7" cy="7" r="4.800" />
      <circle cx="7" cy="7" r="1.800" />
    </svg>
  );
}

const layers = [
  { name: "Predetermin...", color: "#000000", line: "Cont" },
  { name: "Capa 01", color: "#c80000", line: "Cont" },
  { name: "Capa 02", color: "#7a22cc", line: "Con", current: true },
  { name: "Capa 03", color: "#0000ff", line: "Cont", selected: true },
  { name: "Capa 04", color: "#008000", line: "Cont" },
  { name: "Capa 05", color: "#ffffff", line: "Cont" },
];

const panelTabs = [
  { label: "Pr...", art: <svg viewBox="3 3 22 22" className="size-4">{wheelArt}</svg> },
  { label: "L...", art: <svg viewBox="3 3 21 21" className="size-4">{layersArt}</svg>, active: true },
  { label: "Di...", art: <svg viewBox="0 0 16 16" className="size-4"><rect x="1.500" y="1.500" width="13" height="9.500" fill="#90959c" stroke="#222" strokeWidth="1.5" /><path d="M4 14h8M8 11v3" stroke="#222" strokeWidth="1.5" /></svg> },
  { label: "H...", art: <svg viewBox="0 0 16 16" className="size-4"><rect x="1" y="1" width="14" height="14" fill="#3f66d0" stroke="#8aa" /><path d="M1 3h14" stroke="#e8edfb" strokeWidth="2" /><circle cx="8" cy="9" r="4.500" fill="#2746ae" stroke="#fff" /><path d="M6.500 8q0-1.500 1.500-1.500t1.500 1.300q0 .8-1.500 1.700v.8M8 11.200v1" fill="none" stroke="#fff" /></svg> },
];

const panelTools = [
  { name: "New Layer", art: <path d="M3.500 1.500h6l3 3v10h-9zM9.500 1.500v3h3" fill="#fff" stroke="#111" /> },
  { name: "New Sublayer", art: <g fill="#fff" stroke="#111"><path d="M2.500 1.500h5l2 2v7h-7z" /><path d="M6.500 5.500h5l2 2v7h-7z" /></g> },
  { name: "Delete", art: <path d="M2 2l12 12M14 2L2 14" stroke="#333" strokeWidth="2" /> },
  { name: "Up", art: <path d="M2 11l6-6 6 6z" fill="#8a8e95" stroke="#222" /> },
  { name: "Down", art: <path d="M2 5l6 6 6-6z" fill="#8a8e95" stroke="#222" /> },
  { name: "Left", art: <path d="M12 2v12L4 8z" fill="#a9adb3" stroke="#888" /> },
  { name: "Filter", art: <path d="M2 2h12L9.500 8v6l-3 1V8z" fill="#777b82" stroke="#333" /> },
  { name: "Sheet", art: <g fill="#ddd" stroke="#999"><path d="M3 2h8l2 2v10H3z" /><path d="M5 6h6v6H5zM8 6v6M5 9h6" /></g> },
  { name: "Tools", art: <g><path d="M3 14l7-8" stroke="#333" strokeWidth="2" /><path d="M5 3q5-3 9 4l-2 2-2-3-4-1z" fill="#555" stroke="#222" /></g> },
  { name: "Help", art: <circle cx="8" cy="8" r="6.500" fill="#666a72" stroke="#333" /> },
];

function LayersPanel() {
  return (
    <aside className="flex w-[196px] shrink-0 flex-col overflow-hidden text-[11px]">
      <div className="mt-[3px] h-[2px] shrink-0 border-y border-[#aeb4c2]" />
      <div className="flex h-[25px] shrink-0 items-end border-b border-[#b9bfcd] pt-1">
        {panelTabs.map((t) => (
          <button key={t.label} className={`relative flex h-5 w-[43px] shrink-0 items-center gap-[3px] pl-1 text-[12px] ${t.active ? "z-10" : ""}`}>
            <svg viewBox="0 0 54 20" className="absolute top-0 left-0 h-5 w-[54px]">
              <path d="M.5 20V4Q.5 .5 4 .5H34Q38 .5 40 3L53 20" fill={t.active ? "#fafbfd" : "#d5dbec"} stroke="#a3abbd" />
            </svg>
            <span className="relative">{t.art}</span>
            <span className="relative">{t.label}</span>
          </button>
        ))}
        <button aria-label="Panel options" className="relative ml-2 shrink-0"><Gear /></button>
      </div>
      <div className="flex h-[21px] shrink-0 items-center gap-[5px] overflow-hidden border-b border-[#b9bfcd] bg-[#f1f3f7] pl-[2px]">
        {panelTools.map((t) => (
          <button key={t.name} aria-label={t.name} className="size-4 shrink-0">
            <svg viewBox="0 0 16 16" className="size-4">{t.art}</svg>
          </button>
        ))}
      </div>
      <div className="min-h-0 flex-1 overflow-hidden bg-white">
        <table className="w-full table-fixed border-collapse">
          <colgroup>
            <col className="w-[79px]" /><col className="w-[17px]" /><col className="w-[17px]" /><col className="w-[18px]" /><col className="w-[17px]" /><col className="w-[18px]" /><col />
          </colgroup>
          <thead>
            <tr className="h-6">
              <th className="border-r border-[#e5e5e5] pl-[6px] text-left font-normal">Name</th>
              <td className="border-r border-[#e5e5e5]" /><td className="border-r border-[#e5e5e5]" /><td className="border-r border-[#e5e5e5]" /><td className="border-r border-[#e5e5e5]" /><td className="border-r border-[#e5e5e5]" />
              <th className="pl-[7px] text-left font-normal whitespace-nowrap">Line</th>
            </tr>
          </thead>
          <tbody>
            {layers.map((l) => (
              <tr key={l.name} className={`h-[17px] leading-4 ${l.selected ? "bg-[#0078d7] text-white" : ""} ${l.current ? "font-bold" : ""}`}>
                <td className="pl-2 whitespace-nowrap">{l.name}</td>
                <td>{l.current && <svg viewBox="0 0 12 12" className="mx-auto size-3"><path d="M2 6l3 3 6-5" fill="none" stroke="#000" strokeWidth="2" /></svg>}</td>
                <td>
                  {!l.current && (
                    <svg viewBox="0 0 12 14" className="mx-auto h-[14px] w-3">
                      <path d="M4 9Q1.500 6.500 2.500 4a3.600 3.600 0 0 1 7 0Q10.500 6.500 8 9z" fill="#fbf58a" stroke="#77701a" />
                      <path d="M4.500 10h3v2.500h-3z" fill="#ddd" stroke="#444" />
                    </svg>
                  )}
                </td>
                <td>
                  {!l.current && (
                    <svg viewBox="0 0 14 14" className="mx-auto size-[14px]" fill="none" stroke={l.selected ? "#fff" : "#000"}>
                      <path d="M2.500 6.500h7v6h-7zM6 8.500v2" fill={l.selected ? "#0078d7" : "#fff"} />
                      <path d="M7.500 6V4q0-2 2-2t2 2v2" />
                    </svg>
                  )}
                </td>
                <td>
                  <span className={`mx-auto block size-3 border ${l.selected ? "border-white" : "border-black"}`} style={{ backgroundColor: l.color }} />
                </td>
                <td>
                  <span className={`mx-auto block size-3 rounded-full border ${l.selected ? "border-white bg-white" : "border-[#ededed]"}`} />
                </td>
                <td className="pl-1 whitespace-nowrap">{l.line}</td>
              </tr>
            ))}
          </tbody>
        </table>
      </div>
      <div className="flex h-[17px] shrink-0 items-center bg-[#f0f0f0] px-1">
        <button aria-label="Scroll left"><svg viewBox="0 0 10 10" className="size-[10px]"><path d="M7 1L3 5l4 4" fill="none" stroke="#444" strokeWidth="1.5" /></svg></button>
        <div className="flex-1 px-[3px]"><div className="h-[15px] w-[90px] bg-[#cdcdcd]" /></div>
        <button aria-label="Scroll right"><svg viewBox="0 0 10 10" className="size-[10px]"><path d="M3 1l4 4-4 4" fill="none" stroke="#444" strokeWidth="1.5" /></svg></button>
      </div>
      <div className="h-1 shrink-0" />
    </aside>
  );
}

function ViewTab({ label, active, width }: { label: React.ReactNode; active?: boolean; width: string }) {
  return (
    <button className={`relative h-5 shrink-0 ${width}`}>
      <svg viewBox="0 0 100 20" preserveAspectRatio="none" className="absolute inset-0 h-full w-full overflow-visible">
        <path d="M-4 0L8 17Q10 19.500 14 19.500H96Q99.500 19.500 99.500 15V0" fill={active ? "#fff" : "#d9deeb"} stroke="#a7aec0" vectorEffect="non-scaling-stroke" />
      </svg>
      <span className="relative flex items-center justify-center pl-1">{label}</span>
    </button>
  );
}

const statusToggles = [
  { label: "Grid Snap", width: "w-[77px]" },
  { label: "Ortho", width: "w-12" },
  { label: "Planar", width: "w-[50px]", on: true },
  { label: "Osnap", width: "w-[57px]", on: true },
  { label: "SmartTrack", width: "w-[85px]" },
  { label: "Gumball", width: "w-[66px]", on: true },
  { label: "Record History", width: "w-[109px]" },
  { label: "Filter", width: "w-[45px]" },
];

export default function App() {
  return (
    <div className="flex h-screen w-full flex-col overflow-hidden bg-[#e0e3eb] font-['Liberation_Sans',Arial,sans-serif] text-[12px] text-black">
      <svg width="0" height="0" className="absolute">
        <defs>
          <radialGradient id="greyBall" cx="0.35" cy="0.3" r="0.8">
            <stop offset="0" stopColor="#fff" /><stop offset="0.5" stopColor="#a5a8ad" /><stop offset="1" stopColor="#2a2c30" />
          </radialGradient>
          <radialGradient id="blueBall" cx="0.35" cy="0.3" r="0.8">
            <stop offset="0" stopColor="#a8c4ff" /><stop offset="0.35" stopColor="#2656d8" /><stop offset="1" stopColor="#071250" />
          </radialGradient>
        </defs>
      </svg>

      <header className="shrink-0 bg-white font-[Roboto,sans-serif]">
        <div className="flex h-6 items-center pl-[2px]">
          <svg viewBox="0 0 16 16" className="size-4">
            <rect width="16" height="16" fill="#222" />
            <path d="M1 5l3 2 3-2 2 1 5-4 1 6-3 4-4 3-2-3-4 0-1-3z" fill="#e4e4e4" />
            <path d="M5 9l3 1 2-2" fill="none" stroke="#555" />
          </svg>
          <h1 className="pl-[5px]">final_drawing.3dm (45 KB) - Rhinoceros 5.0 [Full] - [Perspectiva]</h1>
          <div className="ml-auto flex gap-[33px] pr-[19px] pb-1">
            <button aria-label="Minimize"><svg viewBox="0 0 12 12" className="size-3"><path d="M1 6.500h10" stroke="#000" /></svg></button>
            <button aria-label="Restore"><svg viewBox="0 0 12 12" className="size-3" fill="none" stroke="#000"><path d="M1.500 3.500h7v7h-7zM3.500 3V1.500h7v7H9" /></svg></button>
            <button aria-label="Close"><svg viewBox="0 0 12 12" className="size-3"><path d="M1 1l10 10M11 1L1 11" stroke="#000" /></svg></button>
          </div>
        </div>
        <nav className="flex h-[18px] items-center gap-[13px] pl-[7px]">
          {menus.map((m) => <button key={m}>{m}</button>)}
        </nav>
      </header>

      <section className="mt-1 flex h-[47px] shrink-0 flex-col border-l-[6px] border-[#d3d7e1] bg-white font-[Roboto,sans-serif]">
        <div className="flex h-7 shrink-0 justify-between border-b border-[#9a9a9a] pl-[2px]">
          <p className="leading-4">Drag objects, tap Alt to make a duplicate, press and hold Alt to temporarily toggle osnaps:</p>
          <div className="flex w-[17px] flex-col items-center justify-around bg-[#f0f0f0]">
            <svg viewBox="0 0 8 6" className="h-[6px] w-2"><path d="M1 5l3-3 3 3" fill="none" stroke="#555" strokeWidth="1.6" /></svg>
            <svg viewBox="0 0 8 6" className="h-[6px] w-2"><path d="M1 1l3 3 3-3" fill="none" stroke="#555" strokeWidth="1.6" /></svg>
          </div>
        </div>
        <div className="flex flex-1 items-center pl-[2px]">
          <label htmlFor="command" className="font-bold">Command:</label>
          <span className="ml-[6px] h-[14px] w-px bg-black" />
          <input id="command" className="h-4 flex-1 outline-none" />
          <div className="mr-[2px] flex w-[14px] flex-col">
            <button aria-label="Previous" className="flex h-2 items-center justify-center border border-[#999] bg-[#f0f0f0]"><svg viewBox="0 0 6 4" className="h-1 w-[6px]"><path d="M0 4l3-4 3 4z" /></svg></button>
            <button aria-label="Next" className="flex h-2 items-center justify-center border border-[#999] bg-[#f0f0f0]"><svg viewBox="0 0 6 4" className="h-1 w-[6px]"><path d="M0 0l3 4 3-4z" /></svg></button>
          </div>
        </div>
      </section>

      <section className="mt-[3px] flex h-[60px] shrink-0 flex-col border-t border-[#b4bac8]">
        <div className="flex h-[19px] shrink-0 items-end border-b border-[#b4bac8] pl-[7px] text-[11px]">
          {toolTabs.map((t, i) => <ToolTab key={t} label={t} active={i === 0} />)}
          <button aria-label="Toolbar options" className="mr-[2px] mb-px ml-auto"><Gear /></button>
        </div>
        <div className="flex flex-1 items-start bg-linear-to-b from-[#f8f9fb] to-[#dde1ea] pt-px pl-[6px]">
          {topTools.map((t) => <ToolButton key={t.name} tool={t} />)}
        </div>
      </section>

      <main className="flex min-h-0 flex-1">
        <aside className="w-16 shrink-0 pt-1 pl-px">
          <div className="mr-[6px] ml-[2px] h-[3px] border-y border-[#aeb4c2]" />
          <div className="grid w-14 grid-cols-2">
            {sideTools.map((t) => <ToolButton key={t.name} tool={t} />)}
          </div>
        </aside>
        <section className="flex min-w-0 flex-1 flex-col">
          <div className="relative min-h-0 flex-1 overflow-hidden bg-[#9da3aa]">
            <Scene />
            <div className="relative flex h-[19px] w-[87px] items-center bg-[#87a1bf] pl-[9px]">
              <span>Perspectiva</span>
              <button aria-label="Viewport menu" className="ml-auto flex h-4 items-center border-l border-black pr-px pl-px">
                <svg viewBox="0 0 8 5" className="h-[5px] w-2"><path d="M0 0h8L4 5z" /></svg>
              </button>
            </div>
          </div>
          <div className="flex h-[21px] shrink-0 items-start overflow-hidden">
            <ViewTab label="Superior" width="w-[60px]" />
            <ViewTab label="Perspectiva" width="w-20" active />
            <ViewTab label="Frontal" width="w-[55px]" />
            <ViewTab label="Derecha" width="w-[61px]" />
            <ViewTab label={<svg viewBox="0 0 10 10" className="size-[10px]"><path d="M3.500.5h3v3h3v3h-3v3h-3v-3h-3v-3h3z" fill="#eee" stroke="#666" /></svg>} width="w-[30px]" />
          </div>
        </section>
        <div className="w-2 shrink-0" />
        <LayersPanel />
      </main>

      <footer className="flex h-[21px] shrink-0 items-stretch border-t border-b-2 border-t-[#a3a9b6] border-b-[#111] text-center leading-[18px] whitespace-nowrap">
        <button className="w-[57px] shrink-0 border-r border-[#a3a9b6]">CPlane</button>
        <span className="w-[88px] shrink-0 border-r border-[#a3a9b6]">x 15.20</span>
        <span className="w-[88px] shrink-0 border-r border-[#a3a9b6]">y -3.90</span>
        <span className="w-[88px] shrink-0 border-r border-[#a3a9b6]">z 0.00</span>
        <span className="w-[88px] shrink-0 border-r border-[#a3a9b6]">Meters</span>
        <button className="flex min-w-0 flex-1 items-center gap-[3px] border-r border-[#a3a9b6] pl-[3px]">
          <span className="size-[14px] border border-black bg-[#7a22cc]" />
          <span>Capa 02</span>
        </button>
        {statusToggles.map((s) => (
          <button key={s.label} className={`shrink-0 border-r border-[#a3a9b6] ${s.width} ${s.on ? "bg-[#e3f1fd] font-bold" : ""}`}>{s.label}</button>
        ))}
        <span className="w-[249px] shrink-0 pl-[3px] text-left">Absolute tolerance: 0.01</span>
      </footer>
    </div>
  );
}
